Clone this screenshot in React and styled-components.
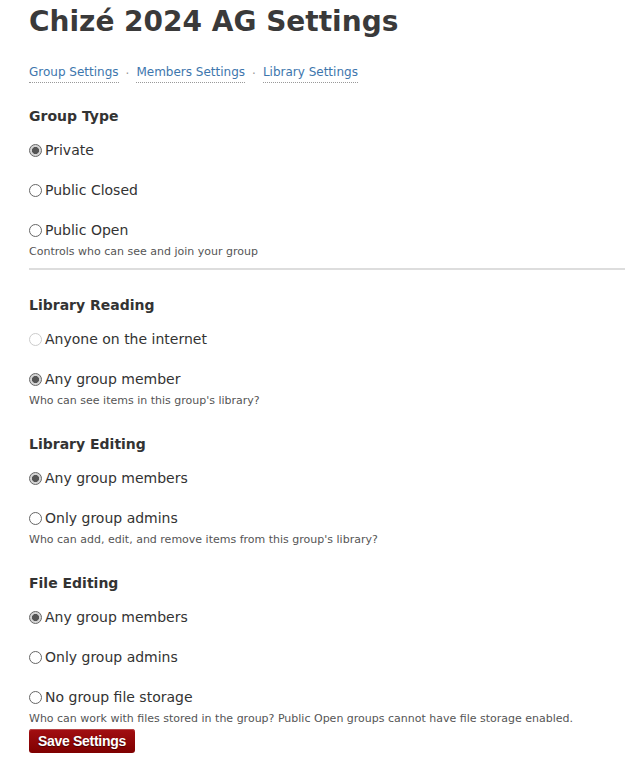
import React from 'react'
import styled, { createGlobalStyle } from 'styled-components'

const GlobalStyle = createGlobalStyle`
  body {
    margin: 0;
    background: #fff;
    font-family: "DejaVu Sans", Verdana, sans-serif;
    color: #333;
  }
`

const Page = styled.div`
  padding: 4px 0 14px 29px;
`

const Title = styled.h1`
  margin: 0;
  font-size: 28px;
  line-height: 36px;
  font-weight: bold;
  color: #3a3a3a;
`

const Nav = styled.nav`
  display: flex;
  align-items: center;
  margin-top: 24px;
  font-size: 12px;
  line-height: 16px;
`

const NavLink = styled.a`
  color: #3d76ad;
  text-decoration: none;
  border-bottom: 1px dotted #999;
  padding-bottom: 2px;
  cursor: pointer;
`

const Dot = styled.span`
  color: #999;
  margin: 0 7px;
`

const Form = styled.form`
  margin-top: 23px;
`

const Section = styled.fieldset`
  border: none;
  margin: 0 0 ${p => p.$last ? '0' : p.$divider ? '25px' : '26px'};
  padding: 0 0 ${p => p.$divider ? '9px' : '0'};
  border-bottom: ${p => p.$divider ? '2px solid #ddd' : 'none'};
`

const Heading = styled.h3`
  margin: 0 0 14px;
  font-size: 14px;
  line-height: 20px;
  font-weight: bold;
  color: #333;
`

const Option = styled.label`
  display: flex;
  align-items: center;
  height: 20px;
  margin-bottom: 20px;
  font-size: 14px;
  color: #333;
  &:last-of-type {
    margin-bottom: 0;
  }
`

const Radio = styled.span`
  box-sizing: border-box;
  width: 13px;
  height: 13px;
  border-radius: 50%;
  border: 1px solid ${p => p.$disabled ? '#ccc' : '#666'};
  background: ${p => p.$checked
    ? 'radial-gradient(circle, #555 0 3.3px, #d4d4d4 3.8px 100%)'
    : '#fff'};
  margin-right: 3px;
  flex-shrink: 0;
`

const Help = styled.div`
  font-size: 11px;
  line-height: 14px;
  color: #555;
  margin-top: 5px;
`

const SaveButton = styled.button`
  margin-top: 3px;
  border: none;
  border-radius: 3px;
  height: 24px;
  padding: 0 9px;
  background: linear-gradient(#a30f12, #7f0000);
  box-shadow: inset 0 1px 0 #b84446;
  color: #fff;
  font-family: "Liberation Sans", Arial, sans-serif;
  font-weight: bold;
  font-size: 14px;
  letter-spacing: -0.3px;
  text-shadow: 0 1px 1px #400;
  cursor: pointer;
`

const sections = [
  {
    title: 'Group Type',
    divider: true,
    help: 'Controls who can see and join your group',
    options: [
      { label: 'Private', checked: true },
      { label: 'Public Closed' },
      { label: 'Public Open' },
    ],
  },
  {
    title: 'Library Reading',
    help: "Who can see items in this group's library?",
    options: [
      { label: 'Anyone on the internet', disabled: true },
      { label: 'Any group member', checked: true },
    ],
  },
  {
    title: 'Library Editing',
    help: "Who can add, edit, and remove items from this group's library?",
    options: [
      { label: 'Any group members', checked: true },
      { label: 'Only group admins' },
    ],
  },
  {
    title: 'File Editing',
    last: true,
    help: 'Who can work with files stored in the group? Public Open groups cannot have file storage enabled.',
    options: [
      { label: 'Any group members', checked: true },
      { label: 'Only group admins' },
      { label: 'No group file storage' },
    ],
  },
]

function App() {
  return (
    <Page>
      <GlobalStyle />
      <Title>Chizé 2024 AG Settings</Title>
      <Nav>
        <NavLink>Group Settings</NavLink>
        <Dot>·</Dot>
        <NavLink>Members Settings</NavLink>
        <Dot>·</Dot>
        <NavLink>Library Settings</NavLink>
      </Nav>
      <Form onSubmit={e => e.preventDefault()}>
        {sections.map(s => (
          <Section key={s.title} $divider={s.divider} $last={s.last}>
            <Heading>{s.title}</Heading>
            {s.options.map(o => (
              <Option key={o.label}>
                <Radio $checked={o.checked} $disabled={o.disabled} />
                {o.label}
              </Option>
            ))}
            <Help>{s.help}</Help>
          </Section>
        ))}
        <SaveButton>Save Settings</SaveButton>
      </Form>
    </Page>
  )
}

export default App
